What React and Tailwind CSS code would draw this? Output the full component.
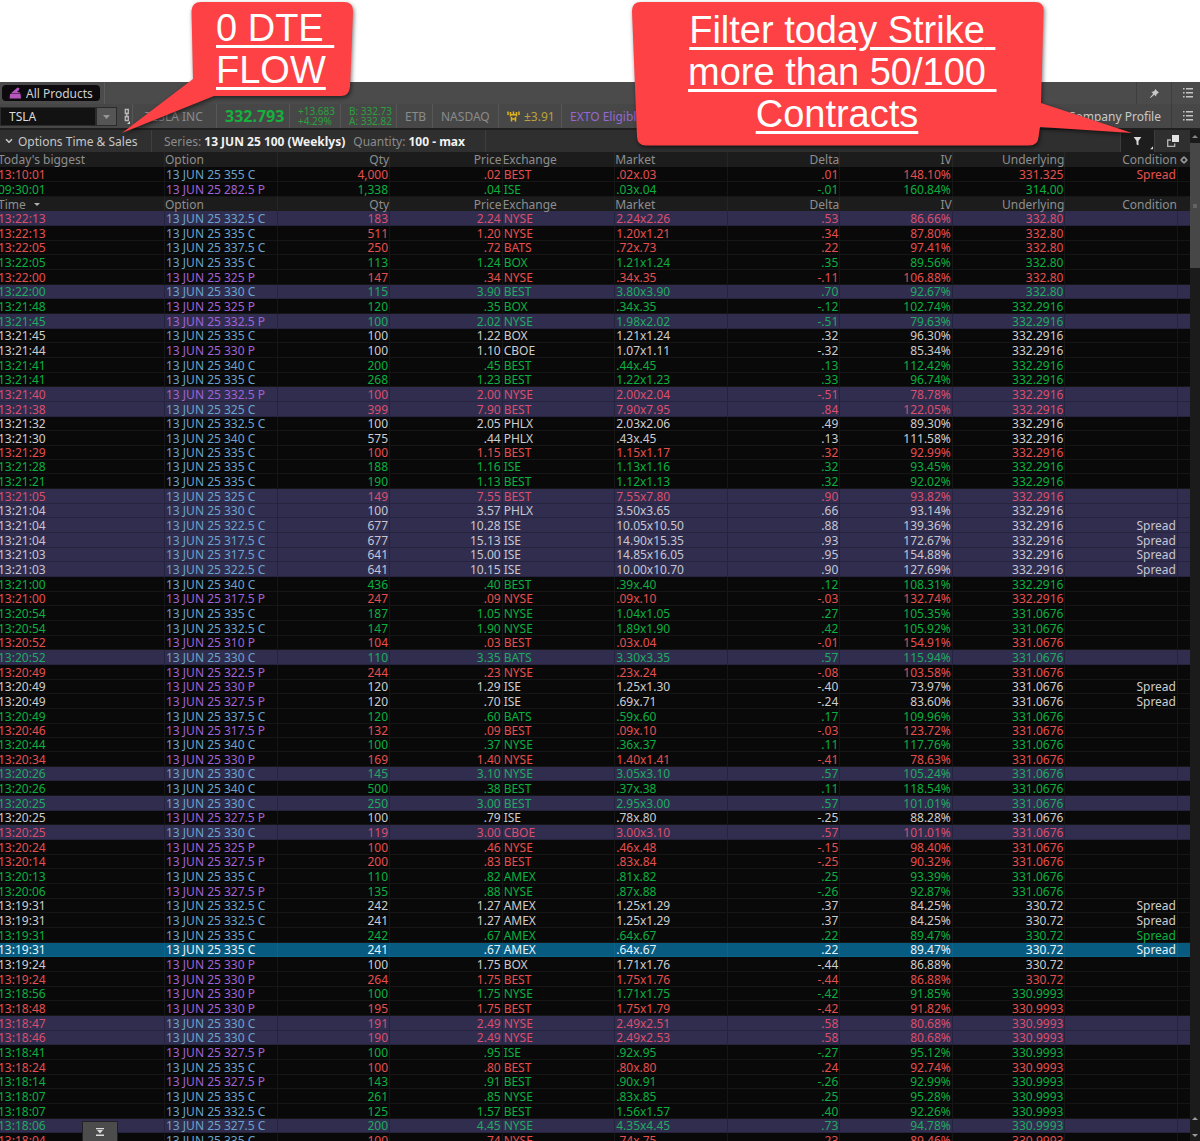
import { ChevronDown } from 'lucide-react';

// side: r = at bid, g = at ask, w = between the market, s = selected row
const biggest = [
  ['r', '13:10:01', '355 C', '4,000', '.02', 'BEST', '.02x.03', '.01', '148.10%', '331.325', 'Spread'],
  ['g', '09:30:01', '282.5 P', '1,338', '.04', 'ISE', '.03x.04', '-.01', '160.84%', '314.00'],
];

const trades = [
  ['r', '13:22:13', '332.5 C', '183', '2.24', 'NYSE', '2.24x2.26', '.53', '86.66%', '332.80'],
  ['r', '13:22:13', '335 C', '511', '1.20', 'NYSE', '1.20x1.21', '.34', '87.80%', '332.80'],
  ['r', '13:22:05', '337.5 C', '250', '.72', 'BATS', '.72x.73', '.22', '97.41%', '332.80'],
  ['g', '13:22:05', '335 C', '113', '1.24', 'BOX', '1.21x1.24', '.35', '89.56%', '332.80'],
  ['r', '13:22:00', '325 P', '147', '.34', 'NYSE', '.34x.35', '-.11', '106.88%', '332.80'],
  ['g', '13:22:00', '330 C', '115', '3.90', 'BEST', '3.80x3.90', '.70', '92.67%', '332.80'],
  ['g', '13:21:48', '325 P', '120', '.35', 'BOX', '.34x.35', '-.12', '102.74%', '332.2916'],
  ['g', '13:21:45', '332.5 P', '100', '2.02', 'NYSE', '1.98x2.02', '-.51', '79.63%', '332.2916'],
  ['w', '13:21:45', '335 C', '100', '1.22', 'BOX', '1.21x1.24', '.32', '96.30%', '332.2916'],
  ['w', '13:21:44', '330 P', '100', '1.10', 'CBOE', '1.07x1.11', '-.32', '85.34%', '332.2916'],
  ['g', '13:21:41', '340 C', '200', '.45', 'BEST', '.44x.45', '.13', '112.42%', '332.2916'],
  ['g', '13:21:41', '335 C', '268', '1.23', 'BEST', '1.22x1.23', '.33', '96.74%', '332.2916'],
  ['r', '13:21:40', '332.5 P', '100', '2.00', 'NYSE', '2.00x2.04', '-.51', '78.78%', '332.2916'],
  ['r', '13:21:38', '325 C', '399', '7.90', 'BEST', '7.90x7.95', '.84', '122.05%', '332.2916'],
  ['w', '13:21:32', '332.5 C', '100', '2.05', 'PHLX', '2.03x2.06', '.49', '89.30%', '332.2916'],
  ['w', '13:21:30', '340 C', '575', '.44', 'PHLX', '.43x.45', '.13', '111.58%', '332.2916'],
  ['r', '13:21:29', '335 C', '100', '1.15', 'BEST', '1.15x1.17', '.32', '92.99%', '332.2916'],
  ['g', '13:21:28', '335 C', '188', '1.16', 'ISE', '1.13x1.16', '.32', '93.45%', '332.2916'],
  ['g', '13:21:21', '335 C', '190', '1.13', 'BEST', '1.12x1.13', '.32', '92.02%', '332.2916'],
  ['r', '13:21:05', '325 C', '149', '7.55', 'BEST', '7.55x7.80', '.90', '93.82%', '332.2916'],
  ['w', '13:21:04', '330 C', '100', '3.57', 'PHLX', '3.50x3.65', '.66', '93.14%', '332.2916'],
  ['w', '13:21:04', '322.5 C', '677', '10.28', 'ISE', '10.05x10.50', '.88', '139.36%', '332.2916', 'Spread'],
  ['w', '13:21:04', '317.5 C', '677', '15.13', 'ISE', '14.90x15.35', '.93', '172.67%', '332.2916', 'Spread'],
  ['w', '13:21:03', '317.5 C', '641', '15.00', 'ISE', '14.85x16.05', '.95', '154.88%', '332.2916', 'Spread'],
  ['w', '13:21:03', '322.5 C', '641', '10.15', 'ISE', '10.00x10.70', '.90', '127.69%', '332.2916', 'Spread'],
  ['g', '13:21:00', '340 C', '436', '.40', 'BEST', '.39x.40', '.12', '108.31%', '332.2916'],
  ['r', '13:21:00', '317.5 P', '247', '.09', 'NYSE', '.09x.10', '-.03', '132.74%', '332.2916'],
  ['g', '13:20:54', '335 C', '187', '1.05', 'NYSE', '1.04x1.05', '.27', '105.35%', '331.0676'],
  ['g', '13:20:54', '332.5 C', '147', '1.90', 'NYSE', '1.89x1.90', '.42', '105.92%', '331.0676'],
  ['r', '13:20:52', '310 P', '104', '.03', 'BEST', '.03x.04', '-.01', '154.91%', '331.0676'],
  ['g', '13:20:52', '330 C', '110', '3.35', 'BATS', '3.30x3.35', '.57', '115.94%', '331.0676'],
  ['r', '13:20:49', '322.5 P', '244', '.23', 'NYSE', '.23x.24', '-.08', '103.58%', '331.0676'],
  ['w', '13:20:49', '330 P', '120', '1.29', 'ISE', '1.25x1.30', '-.40', '73.97%', '331.0676', 'Spread'],
  ['w', '13:20:49', '327.5 P', '120', '.70', 'ISE', '.69x.71', '-.24', '83.60%', '331.0676', 'Spread'],
  ['g', '13:20:49', '337.5 C', '120', '.60', 'BATS', '.59x.60', '.17', '109.96%', '331.0676'],
  ['r', '13:20:46', '317.5 P', '132', '.09', 'BEST', '.09x.10', '-.03', '123.72%', '331.0676'],
  ['g', '13:20:44', '340 C', '100', '.37', 'NYSE', '.36x.37', '.11', '117.76%', '331.0676'],
  ['r', '13:20:34', '330 P', '169', '1.40', 'NYSE', '1.40x1.41', '-.41', '78.63%', '331.0676'],
  ['g', '13:20:26', '330 C', '145', '3.10', 'NYSE', '3.05x3.10', '.57', '105.24%', '331.0676'],
  ['g', '13:20:26', '340 C', '500', '.38', 'BEST', '.37x.38', '.11', '118.54%', '331.0676'],
  ['g', '13:20:25', '330 C', '250', '3.00', 'BEST', '2.95x3.00', '.57', '101.01%', '331.0676'],
  ['w', '13:20:25', '327.5 P', '100', '.79', 'ISE', '.78x.80', '-.25', '88.28%', '331.0676'],
  ['r', '13:20:25', '330 C', '119', '3.00', 'CBOE', '3.00x3.10', '.57', '101.01%', '331.0676'],
  ['r', '13:20:24', '325 P', '100', '.46', 'NYSE', '.46x.48', '-.15', '98.40%', '331.0676'],
  ['r', '13:20:14', '327.5 P', '200', '.83', 'BEST', '.83x.84', '-.25', '90.32%', '331.0676'],
  ['g', '13:20:13', '335 C', '110', '.82', 'AMEX', '.81x.82', '.25', '93.39%', '331.0676'],
  ['g', '13:20:06', '327.5 P', '135', '.88', 'NYSE', '.87x.88', '-.26', '92.87%', '331.0676'],
  ['w', '13:19:31', '332.5 C', '242', '1.27', 'AMEX', '1.25x1.29', '.37', '84.25%', '330.72', 'Spread'],
  ['w', '13:19:31', '332.5 C', '241', '1.27', 'AMEX', '1.25x1.29', '.37', '84.25%', '330.72', 'Spread'],
  ['g', '13:19:31', '335 C', '242', '.67', 'AMEX', '.64x.67', '.22', '89.47%', '330.72', 'Spread'],
  ['s', '13:19:31', '335 C', '241', '.67', 'AMEX', '.64x.67', '.22', '89.47%', '330.72', 'Spread'],
  ['w', '13:19:24', '330 P', '100', '1.75', 'BOX', '1.71x1.76', '-.44', '86.88%', '330.72'],
  ['r', '13:19:24', '330 P', '264', '1.75', 'BEST', '1.75x1.76', '-.44', '86.88%', '330.72'],
  ['g', '13:18:56', '330 P', '100', '1.75', 'NYSE', '1.71x1.75', '-.42', '91.85%', '330.9993'],
  ['r', '13:18:48', '330 P', '195', '1.75', 'BEST', '1.75x1.79', '-.42', '91.82%', '330.9993'],
  ['r', '13:18:47', '330 C', '191', '2.49', 'NYSE', '2.49x2.51', '.58', '80.68%', '330.9993'],
  ['r', '13:18:46', '330 C', '190', '2.49', 'NYSE', '2.49x2.53', '.58', '80.68%', '330.9993'],
  ['g', '13:18:41', '327.5 P', '100', '.95', 'ISE', '.92x.95', '-.27', '95.12%', '330.9993'],
  ['r', '13:18:24', '335 C', '100', '.80', 'BEST', '.80x.80', '.24', '92.74%', '330.9993'],
  ['g', '13:18:14', '327.5 P', '143', '.91', 'BEST', '.90x.91', '-.26', '92.99%', '330.9993'],
  ['g', '13:18:07', '335 C', '261', '.85', 'NYSE', '.83x.85', '.25', '95.28%', '330.9993'],
  ['g', '13:18:07', '332.5 C', '125', '1.57', 'BEST', '1.56x1.57', '.40', '92.26%', '330.9993'],
  ['g', '13:18:06', '327.5 C', '200', '4.45', 'NYSE', '4.35x4.45', '.73', '94.78%', '330.9993'],
  ['r', '13:18:04', '335 C', '100', '.74', 'NYSE', '.74x.75', '.23', '89.46%', '330.9993'],
];

const sideColor = { r: 'text-[#e5504f]', g: 'text-[#0bb040]', w: 'text-[#cdcdcd]', s: 'text-[#e4f2f8]' };
const sideColorItm = { r: 'text-[#da4f6e]', g: 'text-[#22a962]', w: 'text-[#c6c6d2]' };

const rowHeight = 'h-[15px] nth-[3n]:h-[14px] nth-[20n]:h-[14px]';
const columns = ['Option', 'Qty', 'Price', 'Exchange', 'Market', 'Delta', 'IV', 'Underlying', 'Condition'];
const leftAligned = ['Option', 'Exchange', 'Market'];

const HeaderRow = ({ first, children }) => (
  <tr className={`${rowHeight} bg-[#1c1c1c] text-[#8e8e8e]`}>
    <th scope="col" className="p-0 text-left font-normal">{first}</th>
    {columns.map((name) => (
      <th
        key={name}
        scope="col"
        className={`border-l border-[#262626] p-0 font-normal ${leftAligned.includes(name) ? 'text-left' : 'text-right'}`}
      >
        {name}
      </th>
    ))}
    <th className="p-0">{children}</th>
  </tr>
);

const TradeRow = ({ trade }) => {
  const [side, time, contract, qty, price, exchange, market, delta, iv, underlying, condition] = trade;
  const [strike, type] = contract.split(' ');
  const selected = side === 's';
  const itm = type === 'C' ? Number(strike) < Number(underlying) : Number(strike) > Number(underlying);

  const rowColor = selected ? 'bg-[#075b80]' : itm ? 'bg-[#302d4f]' : 'bg-[#090909]';
  const lineColor = selected ? 'border-[#0b6389]' : itm ? 'border-[#25233e]' : 'border-[#161616]';
  const text = itm ? sideColorItm[side] : sideColor[side];
  const optionText = selected ? 'text-[#e4f2f8]' : type === 'C' ? 'text-[#6ba3cc]' : 'text-[#a063d6]';
  const left = `border-b border-l p-0 pl-px text-left ${lineColor}`;
  const right = `border-b border-l p-0 pr-px text-right ${lineColor}`;

  return (
    <tr className={`${rowHeight} ${rowColor} ${text}`}>
      <td className={`border-b p-0 ${lineColor}`}>{time}</td>
      <td className={`${left} ${optionText}`}>13 JUN 25 {contract}</td>
      <td className={right}>{qty}</td>
      <td className={right}>{price}</td>
      <td className={left}>{exchange}</td>
      <td className={left}>{market}</td>
      <td className={right}>{delta}</td>
      <td className={right}>{iv}</td>
      <td className={right}>{underlying}</td>
      <td className={right}>{condition}</td>
      <td className={`border-b border-l p-0 ${lineColor}`} />
    </tr>
  );
};

const ListIcon = () => (
  <svg width="10" height="10" viewBox="0 0 10 10" fill="#c4c4c4">
    <path d="M0 0h1.6v1.6H0zM3 0h7v1.4H3zM0 4h1.6v1.6H0zM3 4h7v1.4H3zM0 8h1.6v1.6H0zM3 8h7v1.4H3z" />
  </svg>
);

const Toolbar = () => (
  <div className="flex h-[22px] items-stretch bg-[#4b4b4b]">
    <div className="flex items-center border-r border-[#5a5a5a] pl-0.5 pr-1">
      <button className="flex h-4 items-center gap-1 rounded bg-[#0c0a0c] px-[7px] text-[#cfcfcf]">
        <svg width="13" height="12" viewBox="0 0 13 12" fill="#b657c0">
          <path d="M1 7h10.500l.5 4.500H.6zM1.600 6.400 4.500 4l4-3.600 2 .8-.8 2.200L8 5l3.200.4.2 1z" />
        </svg>
        All Products
      </button>
    </div>
    <div className="flex-1" />
    <button aria-label="Pin" className="flex w-9 items-center justify-center border-x border-[#3e3e3e]">
      <svg width="9" height="9" viewBox="0 0 9 9" fill="#c9c9c9">
        <path d="M5.2 0 9 3.8 7.8 4.2 6.4 5.6 6 7.6 4.2 5.8 .6 9 0 8.6 3.2 4.8 1.4 3 3.4 2.6 4.8 1.2z" />
      </svg>
    </button>
    <button aria-label="Toolbar menu" className="flex w-7 items-center justify-center pl-1">
      <ListIcon />
    </button>
  </div>
);

const QuoteBar = () => (
  <div className="flex h-6 items-stretch whitespace-nowrap bg-[#474747] text-[#8b8b8b]">
    <div className="flex w-[117px] items-center pb-0.5 pt-[3px]">
      <input
        aria-label="Symbol"
        defaultValue="TSLA"
        className="h-full w-24 min-w-0 border border-[#2b2b2b] bg-[#121212] pl-2 text-[#dcdcdc] outline-none"
      />
      <button aria-label="Recent symbols" className="flex h-full flex-1 items-center justify-center border border-[#2b2b2b] bg-[#555]">
        <svg width="7" height="4" viewBox="0 0 7 4" fill="#969696"><path d="M0 0h7L3.5 4z" /></svg>
      </button>
    </div>
    <button aria-label="Link symbol" className="flex w-4 items-center justify-center border-r border-[#565656]">
      <svg width="11" height="18" viewBox="0 0 11 18" fill="none" stroke="#b9b9b9" strokeWidth="1.3">
        <path d="M6.300 2.500h3v4h-3zM6.300 9.500h3v4h-3zM7.800 5.500v5" />
        <path d="M11 14v3H8z" fill="#d0d0d0" stroke="none" />
      </svg>
    </button>
    <span className="flex w-[84px] items-center border-r border-[#565656] pl-3">TESLA INC</span>
    <span className="flex w-[73px] items-center border-r border-[#565656] pl-2 text-base font-bold text-[#16b03c]">332.793</span>
    <span className="flex w-[51px] flex-col justify-center border-r border-[#565656] pl-2 text-[10px] leading-[10px] text-[#2aa03f]">
      <span>+13.683</span>
      <span>+4.29%</span>
    </span>
    <span className="flex w-14 flex-col justify-center border-r border-[#565656] pl-2 text-[10px] leading-[10px] text-[#2aa03f]">
      <span>B: 332.73</span>
      <span>A: 332.82</span>
    </span>
    <span className="flex w-9 items-center border-r border-[#565656] pl-2">ETB</span>
    <span className="flex w-[66px] items-center border-r border-[#565656] pl-2">NASDAQ</span>
    <span className="flex w-[63px] items-center gap-1 border-r border-[#565656] pl-2 text-[#bda13a]">
      <svg width="13" height="11" viewBox="0 0 13 11" fill="none" stroke="#e0b41c" strokeWidth="1.5">
        <path d="M1 .5v3.500M12 .5v3.500M3.500 1v4.500M6.500 .5v4M9.500 1v4.500M3.500 3.800h6M4.500 6v4.500M8.500 6v4.500M4.500 8h4" />
      </svg>
      ±3.91
    </span>
    <span className="flex flex-1 items-center pl-2 text-[#9667d3]">EXTO Eligible</span>
    <a href="#profile" className="flex items-center border-r border-[#3a3a3a] pr-2.5 text-[#c9c9c9]">Company Profile</a>
    <button aria-label="Quote menu" className="flex w-7 items-center justify-center pl-1">
      <ListIcon />
    </button>
  </div>
);

const TitleBar = () => (
  <div className="flex h-[22px] items-stretch whitespace-nowrap bg-[#2f2f2f] text-[#8b8b8b]">
    <button className="flex w-[152px] items-center gap-1 border-r border-[#3f3f3f] pl-1 text-[#c6c6c6]">
      <ChevronDown size={10} strokeWidth={4} />
      Options Time &amp; Sales
    </button>
    <div className="flex items-center gap-2 border-r border-[#3f3f3f] pl-3 pr-5">
      <span>Series: <b className="text-[#f2f2f2]">13 JUN 25 100 (Weeklys)</b></span>
      <span>Quantity: <b className="text-[#f2f2f2]">100 - max</b></span>
    </div>
    <div className="flex-1" />
    <button aria-label="Filter" className="flex w-[35px] items-center justify-center border-x border-[#3d3d3d] bg-[#1d1d1d]">
      <svg width="34" height="20" viewBox="0 0 34 20" fill="#dadada">
        <path d="M13 6h8l-3 4v4.5l-2-1V10zM33 15.500v3h-3z" />
      </svg>
    </button>
    <button aria-label="Detach window" className="flex w-[35px] items-center justify-center">
      <svg width="12" height="12" viewBox="0 0 12 12">
        <path d="M4 5H.7v6.300h7V8.500" fill="none" stroke="#b5b5b5" strokeWidth="1.300" />
        <path d="M5 0h7v7H5z" fill="#e3e3e3" />
      </svg>
    </button>
  </div>
);

const Scrollbar = () => (
  <div className="flex w-2.5 shrink-0 flex-col items-center bg-[#1b1b1b]">
    <svg className="my-1" width="6" height="5" viewBox="0 0 6 5" fill="#8a8a8a"><path d="M3 1l3 3H0z" /></svg>
    <div className="flex h-[125px] w-full items-center justify-center bg-[#474747]">
      <div className="h-1 w-1 bg-[#636363]" />
    </div>
    <div className="flex-1" />
    <svg className="mb-3" width="6" height="4" viewBox="0 0 6 4" fill="#9a9a9a"><path d="M3 0l3 3H0z" /></svg>
    <svg className="mb-1" width="6" height="4" viewBox="0 0 6 4" fill="#9a9a9a"><path d="M3 4L0 1h6z" /></svg>
  </div>
);

const calloutText = 'whitespace-pre-wrap font-["Liberation_Sans",sans-serif] text-[38px] leading-[42px] text-white underline decoration-[3px] underline-offset-4';

const FlowCallout = () => (
  <div className="absolute left-[120px] top-0 w-60">
    <svg className="absolute left-0 top-0 drop-shadow-[1px_2px_2px_rgba(0,0,0,0.55)]" width="240" height="140" viewBox="0 0 240 140" fill="#fd4144">
      <path d="M81 2H224Q233 2 233 11L230 87Q229 96 221 96H94L2 133 73 79 71.500 11Q72 2 81 2Z" />
    </svg>
    <p className={`relative pl-24 pt-[7px] ${calloutText}`}>{'0 DTE \nFLOW'}</p>
  </div>
);

const FilterCallout = () => (
  <div className="absolute right-[66px] top-0 w-[504px]">
    <svg className="absolute left-0 top-0 drop-shadow-[1px_2px_2px_rgba(0,0,0,0.55)]" width="504" height="150" viewBox="0 0 504 150" fill="#fd4144">
      <path d="M11 2H405Q414 2 413.500 11L411 103 502 133 410 127 408.500 137Q408 145.500 399 145.500H16Q7.500 145.500 7 137L2 11Q2 2 11 2Z" />
    </svg>
    <p className={`relative w-[414px] px-14 pt-[9px] text-center ${calloutText}`}>
      Filter today Strike more than 50/100 Contracts
    </p>
  </div>
);

const App = () => (
  <div className='relative flex h-screen flex-col overflow-hidden bg-white pt-[82px] font-["Noto_Sans","Open_Sans",sans-serif] text-[12px] leading-[13px]'>
    <Toolbar />
    <QuoteBar />
    <div className="flex min-h-0 flex-1 border-t-2 border-[#1f1f1f] bg-[#090909]">
      <div className="flex min-w-0 flex-1 flex-col">
        <TitleBar />
        <div className="min-h-0 flex-1 overflow-hidden">
          <table className="-ml-0.5 w-[calc(100%+2px)] table-fixed border-separate border-spacing-0">
            <colgroup>
              <col className="w-[166px]" />
              {columns.map((name) => <col key={name} />)}
              <col className="w-[13px]" />
            </colgroup>
            <thead>
              <HeaderRow first="Today's biggest">
                <button aria-label="Columns" className="flex w-full items-center justify-center">
                  <svg width="8" height="8" viewBox="0 0 8 8" fill="none" stroke="#9a9a9a">
                    <circle cx="4" cy="4" r="2.200" strokeWidth="1.500" />
                    <path d="M4 0v1.500M4 6.500V8M0 4h1.500M6.500 4H8" />
                  </svg>
                </button>
              </HeaderRow>
            </thead>
            <tbody>
              {biggest.map((trade) => <TradeRow key={trade[1]} trade={trade} />)}
              <HeaderRow
                first={
                  <span className="flex items-center gap-2">
                    Time
                    <svg width="6" height="3" viewBox="0 0 6 3" fill="#b0b0b0"><path d="M0 0h6L3 3z" /></svg>
                  </span>
                }
              />
              {trades.map((trade, i) => <TradeRow key={i} trade={trade} />)}
            </tbody>
          </table>
        </div>
      </div>
      <Scrollbar />
    </div>

    <button
      aria-label="Scroll to latest"
      className="absolute bottom-0 left-[82px] flex h-5 w-9 items-center justify-center border border-b-0 border-[#222] bg-[#4c4c4c]"
    >
      <svg width="8" height="8" viewBox="0 0 8 8" fill="#dcdcdc"><path d="M0 0h8v1.200H0zM1 2h6L4 5.500zM0 6.500h8v1.400H0z" /></svg>
    </button>
    <FlowCallout />
    <FilterCallout />
  </div>
);

export default App;
